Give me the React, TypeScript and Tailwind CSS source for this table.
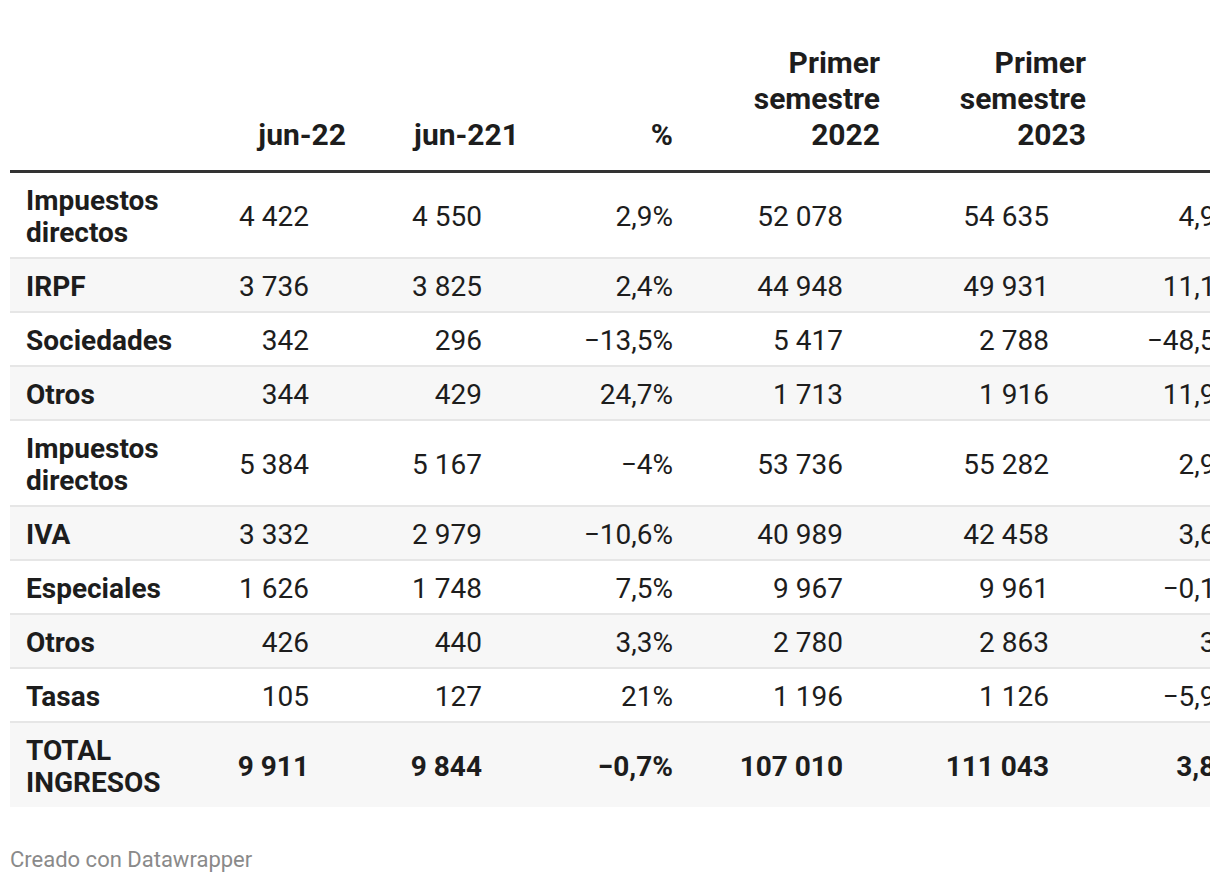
import React from "react";

type Row = { label: string; v: string[]; stripe: boolean; total?: boolean };

const rows: Row[] = [
  { label: "Impuestos directos", v: ["4\u00A0422", "4\u00A0550", "2,9%", "52\u00A0078", "54\u00A0635", "4,9%"], stripe: false },
  { label: "IRPF", v: ["3\u00A0736", "3\u00A0825", "2,4%", "44\u00A0948", "49\u00A0931", "11,1%"], stripe: true },
  { label: "Sociedades", v: ["342", "296", "\u221213,5%", "5\u00A0417", "2\u00A0788", "\u221248,5%"], stripe: false },
  { label: "Otros", v: ["344", "429", "24,7%", "1\u00A0713", "1\u00A0916", "11,9%"], stripe: true },
  { label: "Impuestos directos", v: ["5\u00A0384", "5\u00A0167", "\u22124%", "53\u00A0736", "55\u00A0282", "2,9%"], stripe: false },
  { label: "IVA", v: ["3\u00A0332", "2\u00A0979", "\u221210,6%", "40\u00A0989", "42\u00A0458", "3,6%"], stripe: true },
  { label: "Especiales", v: ["1\u00A0626", "1\u00A0748", "7,5%", "9\u00A0967", "9\u00A0961", "\u22120,1%"], stripe: false },
  { label: "Otros", v: ["426", "440", "3,3%", "2\u00A0780", "2\u00A0863", "3%"], stripe: true },
  { label: "Tasas", v: ["105", "127", "21%", "1\u00A0196", "1\u00A0126", "\u22125,9%"], stripe: false },
  { label: "TOTAL INGRESOS", v: ["9\u00A0911", "9\u00A0844", "\u22120,7%", "107\u00A0010", "111\u00A0043", "3,8%"], stripe: true, total: true },
];

const colW = ["w-[186px]", "w-[150px]", "w-[173px]", "w-[154px]", "w-[207px]", "w-[206px]", "w-[150px]"];
const valPad = ["pr-[37px]", "pr-[37px]", "pr-0", "pr-[37px]", "pr-[37px]", "pr-0"];

export default function App() {
  return (
    <div className="w-[1220px] h-[884px] overflow-hidden bg-white font-['Roboto',sans-serif] text-[#1d1d1d]">
      <div className="pl-[10px] pt-[45px]">
        <div className="w-[1200px] overflow-hidden">
          <table className="table-fixed border-separate border-spacing-0 w-[1226px]">
            <colgroup>
              {colW.map((c, i) => (
                <col key={i} className={c} />
              ))}
            </colgroup>
            <thead>
              <tr>
                <th className="pl-4 pb-[17px] align-bottom text-left border-b-[3px] border-[#333333]"></th>
                {["jun-22", "jun-221", "%", "Primer semestre 2022", "Primer semestre 2023", "%"].map((h, i) => (
                  <th
                    key={i}
                    className="pb-[17px] align-bottom text-right font-bold text-[30px] leading-[36px] text-[#1d1d1d] border-b-[3px] border-[#333333]"
                  >
                    {i >= 3 && i <= 4 ? (
                      <>
                        Primer
                        <br />
                        semestre
                        <br />
                        {h.slice(-4)}
                      </>
                    ) : (
                      h
                    )}
                  </th>
                ))}
              </tr>
            </thead>
            <tbody>
              {rows.map((r, ri) => {
                const rowCls = `${r.stripe ? "bg-[#f7f7f7]" : "bg-white"} ${r.total ? "" : "border-b-2 border-[#e6e6e6]"}`;
                return (
                  <tr key={ri}>
                    <td className={`${rowCls} pl-4 pr-2 pt-[12px] pb-[8px] align-middle text-left font-bold text-[28px] leading-[32px]`}>
                      {r.label}
                    </td>
                    {r.v.map((v, vi) => (
                      <td
                        key={vi}
                        className={`${rowCls} ${valPad[vi]} pt-[12px] pb-[8px] align-middle text-right text-[28px] leading-[32px] whitespace-nowrap ${r.total ? "font-bold" : "font-normal"}`}
                      >
                        {v}
                      </td>
                    ))}
                  </tr>
                );
              })}
            </tbody>
          </table>
        </div>
      </div>
      <div className="pl-[10px] pt-[40px] text-[22px] leading-[26px] text-[#8a8a8a] font-['Roboto',sans-serif]">
        Creado con Datawrapper
      </div>
    </div>
  );
}
